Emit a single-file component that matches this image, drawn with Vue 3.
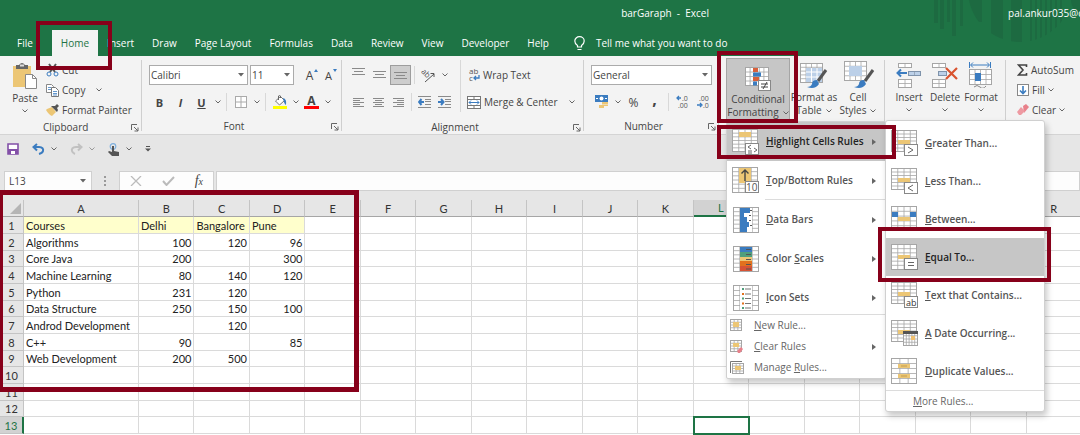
<script setup>
import { h, ref } from 'vue'

const G = '#a6a6a6'
const grid = (x, y, w, ht, c, r, s = G) => {
  let d = ''
  for (let i = 1; i < c; i++) d += `M${x + (w * i) / c} ${y}v${ht}`
  for (let i = 1; i < r; i++) d += `M${x} ${y + (ht * i) / r}h${w}`
  return `<rect x="${x}" y="${y}" width="${w}" height="${ht}" fill="#fff" stroke="${s}"/><path d="${d}" stroke="${s}" fill="none" stroke-width=".8"/>`
}
const box = (x, y, w, ht, f) => `<rect x="${x}" y="${y}" width="${w}" height="${ht}" fill="${f}"/>`
const line = (d, s = '#555', w = 1) => `<path d="${d}" fill="none" stroke="${s}" stroke-width="${w}"/>`
const label = (x, y, t, s = 9, f = '#555') => `<text x="${x}" y="${y}" font-size="${s}" font-weight="400" fill="${f}" font-family="Open Sans, sans-serif">${t}</text>`
const Y = '#ecc675'
const B = '#3b7cc0'
const ruleBase = grid(0.5, 0.5, 25, 21, 4, 6) + box(7, 10, 12, 4, Y)
const badge = (inner) => `<rect x="13.5" y="14.5" width="13" height="11" fill="#fff" stroke="#888"/>` + inner
const brush = line('M32 9L24 20', '#555', 3) + `<path d="M23 19q-5 0-5 4q-1 3-5 3q8 3 12-3z" fill="${B}"/>`
const lines = (arr) => line(arr.map(([x, y, w]) => `M${x} ${y + 0.5}h${w}`).join(''), '#8a8a8a')

const icons = {
  paste: [26, 28, `<rect x="1" y="4" width="18" height="21" fill="${Y}"/><path d="M4 3h3q3-4 6 0h3v4H4z" fill="#666"/><rect x="8" y="2.500" width="4" height="2" fill="#ddd"/><path d="M13.500 12.500h7l4 4v10h-11z" fill="#fff" stroke="#888"/><path d="M20.500 12.500v4h4" fill="none" stroke="#888"/>`],
  cut: [13, 14, line('M3 1L9 9M10 1L4 9', '#555', 2) + `<circle cx="3" cy="11" r="2" fill="none" stroke="${B}"/><circle cx="10" cy="11" r="2" fill="none" stroke="${B}"/>`],
  copy: [13, 14, `<path d="M.5 1.500h5l2 2v6h-7z" fill="#fff" stroke="#888"/><path d="M5.500 4.500h4l3 3v6h-7z" fill="#fff" stroke="#777"/>` + line('M7 8.500h4M7 10.500h4M7 12h4M2 4.500h3M2 6.500h3', B, 0.8)],
  painter: [13, 12, `<path d="M1 5l5-2 4 5-4 4q-3-1-6-6z" fill="${Y}"/><path d="M5 2l6 6 1-2-1-2 2-2-2-2-2 2z" fill="#555"/>`],
  launch: [8, 8, line('M.5 6V.5H6M3 3l4 4M7 3.500V7H3.500', '#666')],
  chev: [6, 4, line('M.5 .5L3 3L5.500 .5', '#666')],
  tri: [6, 4, `<path d="M0 0h6L3 3.500z" fill="#666"/>`],
  bordr: [12, 12, `<rect x=".5" y=".5" width="11" height="11" fill="#fff" stroke="#aaa"/>` + line('M6 0v12M0 6h12', '#aaa')],
  bucket: [14, 14, `<path d="M2.500 6l5-4.500 4 4-5 4.500z" fill="#fff" stroke="#777"/><path d="M5.500 5V1q1-1 2 0v2" fill="none" stroke="#666"/><path d="M10 3q4 1 3 7q-2-1-3-7z" fill="${B}"/>` + box(0, 11, 14, 3, '#ff0')],
  grow: [4, 3, `<path d="M0 3L2 0L4 3z" fill="${B}"/>`],
  shrink: [4, 3, `<path d="M0 0L2 3L4 0z" fill="${B}"/>`],
  top: [13, 8, lines([[0, 0, 13], [2, 3, 9], [0, 6, 13]])],
  mid: [13, 8, lines([[0, 0, 13], [2, 3, 9], [0, 6, 13]])],
  left: [11, 9, lines([[0, 0, 11], [0, 2, 7], [0, 4, 11], [0, 6, 7], [0, 8, 11]])],
  center: [11, 9, lines([[0, 0, 11], [2, 2, 7], [0, 4, 11], [2, 6, 7], [0, 8, 11]])],
  right: [11, 9, lines([[0, 0, 11], [4, 2, 7], [0, 4, 11], [4, 6, 7], [0, 8, 11]])],
  orient: [15, 15, `<g transform="rotate(45 6 6)">${label(0, 9, 'ab', 8)}</g>` + line('M4 14L13 6M13 9V5.500H9.500')],
  outdent: [14, 12, lines([[0, 0, 13], [7, 3, 6], [7, 5, 6], [7, 8, 6], [0, 11, 13]]) + line('M6 6H1M3.500 3L1 6l2.500 3', B, 2)],
  indent: [14, 12, lines([[0, 0, 13], [7, 3, 6], [7, 5, 6], [7, 8, 6], [0, 11, 13]]) + line('M0 6h5M3 3l2.500 3L3 9', B, 2)],
  wrap: [12, 18, label(1, 8, 'ab', 8) + label(1, 15, 'c', 8) + line('M11 9v3H6M8 10L6 12l2 2', B, 1.3)],
  merge: [14, 13, `<rect x=".5" y=".5" width="13" height="12" fill="#fff" stroke="#777"/>` + line('M0 3.500h14M0 9.500h14M7 0v3.500M7 9.500V13', '#777') + line('M2 6.500h10M4 4.500L2 6.500l2 2M10 4.500l2 2-2 2', B)],
  money: [14, 14, box(0, 0, 13, 7, B) + `<circle cx="6.500" cy="3.500" r="2" fill="#fff"/>` + box(1, 3, 2, 1, '#fff') + box(10, 3, 2, 1, '#fff') + box(7, 7, 6, 2, Y) + box(7, 9.500, 6, 1.500, Y) + box(4, 10, 5, 3, Y)],
  decinc: [13, 16, label(6, 7, '.0', 7) + label(2, 14, '.00', 7) + line('M5 4H1M3 2L1 4l2 2', B, 1.3)],
  decdec: [13, 16, label(2, 7, '.00', 7) + label(6, 14, '.0', 7) + line('M0 11h4M3 9l2 2-2 2', B, 1.3)],
  cond: [26, 24, grid(0.5, 0.5, 23, 18, 5, 4) + box(8, 1, 5, 4, '#d9603b') + box(8, 5.500, 8, 4, B) + box(8, 10, 6, 4, '#d9603b') + box(8, 14.500, 4, 4, B) + `<rect x="13.500" y="13.500" width="12" height="10" fill="#fff" stroke="#888"/>` + line('M16 17h7M16 20h7M22 15l-4 7', '#444')],
  fmtTable: [34, 28, grid(3.5, 2.5, 22, 19, 4, 5) + box(9, 7, 16, 14, '#bcd0e8') + line('M9 11h16M9 16h16M14.500 7v14M20 7v14', '#fff') + `<g transform="translate(-3 0)">${brush}</g>`],
  styles: [34, 28, grid(3.5, 0.5, 22, 19, 4, 4) + box(8, 5, 13, 10, '#bcd0e8') + brush],
  insert: [26, 26, grid(2.5, 1.5, 13, 4, 2, 1) + grid(12.5, 9.5, 12, 4, 2, 1, '#7f93ab') + box(13, 10, 5, 3, '#bcd0e8') + box(19, 10, 5, 3, '#bcd0e8') + grid(2.5, 17.5, 13, 8, 2, 2) + line('M11 11H2M5 7.500L1.500 11L5 14.500', B, 2)],
  del: [26, 26, grid(0.5, 1.5, 13, 4, 2, 1) + `<rect x="6.500" y="9.500" width="8" height="4" fill="#bcd0e8" stroke="#7f93ab"/>` + grid(0.5, 17.5, 13, 8, 2, 2) + line('M14 6l11 11M25 6L14 17', '#d9532f', 2.2)],
  format: [26, 26, grid(1.5, 7.5, 22, 15, 4, 3) + box(7, 11, 6, 8, B) + line('M3 3h18M5 .5L2.500 3L5 5.500M19 .5L21.500 3L19 5.500M1.500 0v6M22.500 0v6', B) + line('M6 25q3-3 6 0t6-1', '#888')],
  sum: [11, 12, line('M9.500 3V1H1.500L6 6L1.500 11H9.500V9', '#444', 1.6)],
  fill: [12, 12, `<rect x=".5" y=".5" width="11" height="11" fill="#fff" stroke="#888"/>` + line('M6 2v7M3 6.500L6 9.500L9 6.500', B, 1.6)],
  eraser: [12, 12, `<path d="M6 2l3-2 3 3-5 6z" fill="#e8808a"/><path d="M0 8l4-5 4 4-4 4H2z" fill="#ee9aa2"/>`],
  bulb: [11, 15, line('M3.500 11V9.500Q.8 7.800.8 5a4.700 4.300 0 0 1 9.400 0Q10.200 7.800 7.500 9.500V11zM3.500 13.500h4', '#fff', 1.2)],
  save: [12, 12, `<path d="M1 1h10v10H1z" fill="#fff" stroke="#8350a8" stroke-width="1.600"/>` + box(1, 6, 10, 5, '#8350a8') + box(4, 8, 4, 3, '#fff')],
  undo: [13, 12, line('M5 1L1.500 4L5 7.500M2 4h5q5 .5 4 4q-.5 2-4 3', B, 2)],
  redo: [13, 12, line('M8 1l3.500 3L8 7.500M11 4H6Q1 4.500 2 8q.5 2 3 3', '#aaa', 2)],
  touch: [12, 13, `<circle cx="5" cy="3.500" r="2.800" fill="none" stroke="#7fb0de" stroke-width="1.200"/><path d="M4 3h2v5l5 1v4H4L0 9l1-1 3 1z" fill="#555"/>`],
  custom: [6, 6, line('M1 .5h4', '#555') + `<path d="M0 2.500h6L3 5.500z" fill="#555"/>`],
  dots: [3, 10, box(0, 0, 2, 2, '#999') + box(0, 4, 2, 2, '#999') + box(0, 8, 2, 2, '#999')],
  cancel: [12, 10, line('M1 0l10 10M11 0L1 10', '#bbb', 1.3)],
  check: [13, 10, line('M1 5l3.500 4L12 1', '#bbb', 2)],
  hl: [28, 26, grid(0.5, 0.5, 25, 22, 4, 6) + box(7, 3, 12, 5, Y) + badge('') + line('M19 16l-3 2 3 2M22 19l3 2-3 2M16 22h4M16 24h4', '#666')],
  topbot: [28, 27, grid(0.5, 0.5, 25, 25, 4, 6) + box(7, 1, 12, 15, Y) + line('M13 14V3M9.500 6.500L13 3l3.500 3.500', '#444', 1.4) + badge(label(14, 24, '10', 10))],
  bars: [26, 26, grid(0.5, 0.5, 25, 25, 4, 6) + box(7, 1, 12, 24, '#fff') + box(7, 1, 10, 5, B) + box(7, 6, 4, 5, B) + box(7, 10, 7, 5, B) + box(7, 15, 9, 5, B) + box(7, 20, 7, 5, B) + line('M17 3.500h2M16 8.500h2M16 13.500h2M17 18.500h2')],
  scales: [26, 26, grid(0.5, 0.5, 25, 25, 4, 6) + box(7, 1, 12, 5, B) + box(7, 6, 12, 5, '#4f9f7c') + box(7, 11, 12, 4, Y) + box(7, 15, 12, 5, '#e2711d') + box(7, 20, 12, 5, '#d75335') + line('M13 3.500h5M13 8.500h5M13 13.500h5M13 18.500h5M13 23h5')],
  sets: [26, 26, grid(0.5, 0.5, 25, 25, 4, 5) + box(7, 1, 12, 24, '#fff') + line('M12 4h6M12 9h6M12 13.500h6M12 18.500h6M12 23h6', '#777') + box(9, 3, 2, 2, '#4f9f7c') + box(9, 8, 2, 2, '#e2711d') + box(9, 12.500, 2, 2, '#4f9f7c') + box(9, 17.500, 2, 2, '#e2711d') + box(9, 22, 2, 2, '#4f9f7c')],
  newRule: [14, 13, grid(0.5, 0.5, 11, 11, 3, 4) + box(3, 3, 6, 5, Y)],
  clrRule: [14, 13, grid(0.5, 0.5, 11, 11, 3, 4) + box(3, 3, 6, 4, Y) + `<path d="M7 11l4-4 2 2-3 4H8z" fill="#e8808a"/>`],
  mngRule: [14, 13, line('M.5 12V.5H12', '#777') + grid(2.5, 2.5, 11, 10, 3, 4) + box(5, 5, 6, 4, Y)],
  gt: [28, 27, ruleBase + badge(line('M17 17l5 3-5 3', '#666'))],
  lt: [28, 27, ruleBase + badge(line('M22 17l-5 3 5 3', '#666'))],
  between: [28, 27, grid(0.5, 0.5, 25, 24, 4, 5) + box(1, 6, 6, 5, B) + box(19, 6, 6, 5, B) + box(7, 11, 12, 4, Y)],
  eq: [28, 27, grid(0.5, 0.5, 25, 25, 4, 6) + box(7, 11, 12, 4, Y) + badge(line('M17 18.500h6M17 21.500h6', '#666'))],
  text: [28, 27, ruleBase + badge(label(15, 23.500, 'ab', 9, '#333'))],
  date: [28, 27, ruleBase + grid(12.5, 12.5, 14, 13, 5, 4) + box(12, 11, 15, 3, '#555') + box(20, 16, 4, 4, '#f0c070')],
  dup: [28, 27, grid(0.5, 0.5, 25, 25, 3, 5) + box(7, 6, 12, 4, Y) + box(7, 16, 12, 4, Y) + line('M10 8h6M10 18h6', '#b89248', 0.8)],
}
const Ico = (p) => {
  const [w, ht, body] = icons[p.n]
  return h('svg', { width: w, height: ht, viewBox: `0 0 ${w} ${ht}`, 'aria-hidden': 'true', innerHTML: body })
}
Ico.props = ['n']

const tabs = ['File', 'Home', 'Insert', 'Draw', 'Page Layout', 'Formulas', 'Data', 'Review', 'View', 'Developer', 'Help']
const cols = 'ABCDEFGHIJKLMNOPQR'.split('')
const sheet = [
  ['Courses', 'Delhi', 'Bangalore', 'Pune'],
  ['Algorithms', 100, 120, 96],
  ['Core Java', 200, '', 300],
  ['Machine Learning', 80, 140, 120],
  ['Python', 231, 120, ''],
  ['Data Structure', 250, 150, 100],
  ['Androd Development', '', 120, ''],
  ['C++', 90, '', 85],
  ['Web Development', 200, 500, ''],
]
const cell = (r, c) => (sheet[r - 1] ? sheet[r - 1][c] : '')

const rules = [
  { i: 'hl', t: ['', 'H', 'ighlight Cells Rules'], on: true, sub: true },
  { i: 'topbot', t: ['', 'T', 'op/Bottom Rules'], sub: true, end: true },
  { i: 'bars', t: ['', 'D', 'ata Bars'], sub: true },
  { i: 'scales', t: ['Color ', 'S', 'cales'], sub: true },
  { i: 'sets', t: ['', 'I', 'con Sets'], sub: true },
]
const manage = [
  { i: 'newRule', t: ['', 'N', 'ew Rule...'] },
  { i: 'clrRule', t: ['', 'C', 'lear Rules'], sub: true },
  { i: 'mngRule', t: ['Manage ', 'R', 'ules...'] },
]
const highlights = [
  { i: 'gt', t: ['', 'G', 'reater Than...'] },
  { i: 'lt', t: ['', 'L', 'ess Than...'] },
  { i: 'between', t: ['', 'B', 'etween...'] },
  { i: 'eq', t: ['', 'E', 'qual To...'], on: true },
  { i: 'text', t: ['', 'T', 'ext that Contains...'] },
  { i: 'date', t: ['', 'A', ' Date Occurring...'] },
  { i: 'dup', t: ['', 'D', 'uplicate Values...'] },
]
const nameBox = ref('L13')
const formula = ref('')
</script>

<template>
  <div class="app">
    <header class="top">
      <svg class="deco" width="150" height="56" viewBox="0 0 150 56" aria-hidden="true">
        <clipPath id="disc"><circle cx="90" cy="-10" r="52" /></clipPath>
        <path d="M4 0h4v23h-4zM10 0h4v29h-4zM17 0h3v22h-3zM22 0h4v36h-4zM30 0h3v26h-3z" />
        <path clip-path="url(#disc)" d="M30 0h22v22h-22zM61 0h12v56h-12zM81 0h11v56h-11zM100 0h2v56h-2zM105 0h2v56h-2zM110 0h2v56h-2zM115 0h2v56h-2zM120 0h2v56h-2zM125 0h2v56h-2zM130 0h2v56h-2z" />
        <circle cx="155" cy="0" r="14" />
      </svg>
      <div class="title">
        <span class="doc">barGaraph&nbsp; -&nbsp; Excel</span>
        <span class="user">pal.ankur035@c</span>
      </div>
      <nav class="tabs">
        <a v-for="t in tabs" :key="t" href="#" :class="{ on: t === 'Home' }">{{ t }}</a>
        <a href="#" class="tell"><Ico n="bulb" />Tell me what you want to do</a>
      </nav>
    </header>

    <section class="ribbon">
      <div class="group clip">
        <div class="body">
          <button class="big"><Ico n="paste" /><span>Paste</span><Ico n="chev" /></button>
          <div class="stack">
            <button><Ico n="cut" />Cut</button>
            <button><Ico n="copy" />Copy<Ico n="chev" class="gap" /></button>
            <button><Ico n="painter" />Format Painter</button>
          </div>
        </div>
        <div class="name">Clipboard<button class="launch" aria-label="Clipboard settings"><Ico n="launch" /></button></div>
      </div>

      <div class="group font">
        <div class="body col">
          <div class="line">
            <label class="pick face"><select aria-label="Font"><option>Calibri</option></select><Ico n="tri" /></label>
            <label class="pick size"><select aria-label="Font size"><option>11</option></select><Ico n="tri" /></label>
            <button class="letter">A<Ico n="grow" /></button>
            <button class="letter small">A<Ico n="shrink" /></button>
          </div>
          <div class="line">
            <button class="w21"><b>B</b></button>
            <button class="w21"><b><i>I</i></b></button>
            <button class="w21"><b><u>U</u></b></button>
            <button class="ch" aria-label="Underline options"><Ico n="chev" /></button>
            <hr />
            <button class="w21" aria-label="Borders"><Ico n="bordr" /></button>
            <button class="ch" aria-label="Border options"><Ico n="chev" /></button>
            <hr />
            <button class="w21" aria-label="Fill colour"><Ico n="bucket" /></button>
            <button class="ch" aria-label="Fill colour options"><Ico n="chev" /></button>
            <button class="w21 ink"><b>A</b></button>
            <button class="ch" aria-label="Font colour options"><Ico n="chev" /></button>
          </div>
        </div>
        <div class="name">Font<button class="launch" aria-label="Font settings"><Ico n="launch" /></button></div>
      </div>

      <div class="group align">
        <div class="body">
          <div class="col">
            <div class="line">
              <button class="w21 high" aria-label="Top align"><Ico n="top" /></button>
              <button class="w21" aria-label="Middle align"><Ico n="mid" /></button>
              <button class="w21 low on" aria-label="Bottom align"><Ico n="mid" /></button>
              <hr />
              <button class="w21" aria-label="Orientation"><Ico n="orient" /></button>
              <button class="ch" aria-label="Orientation options"><Ico n="chev" /></button>
            </div>
            <div class="line">
              <button class="w21" aria-label="Align left"><Ico n="left" /></button>
              <button class="w21" aria-label="Center"><Ico n="center" /></button>
              <button class="w21" aria-label="Align right"><Ico n="right" /></button>
              <hr />
              <button class="w21" aria-label="Decrease indent"><Ico n="outdent" /></button>
              <button class="w21" aria-label="Increase indent"><Ico n="indent" /></button>
            </div>
          </div>
          <div class="col wide">
            <div class="line"><button class="txt"><Ico n="wrap" />Wrap Text</button></div>
            <div class="line"><button class="txt"><Ico n="merge" />Merge &amp; Center<Ico n="chev" class="gap" /></button></div>
          </div>
        </div>
        <div class="name">Alignment<button class="launch" aria-label="Alignment settings"><Ico n="launch" /></button></div>
      </div>

      <div class="group number">
        <div class="body col">
          <div class="line">
            <label class="pick form"><select aria-label="Number format"><option>General</option></select><Ico n="tri" /></label>
          </div>
          <div class="line">
            <button class="w21" aria-label="Currency"><Ico n="money" /></button>
            <button class="ch" aria-label="Currency options"><Ico n="chev" /></button>
            <button class="w21 sym">%</button>
            <button class="w21 comma" aria-label="Comma style"><b>,</b></button>
            <hr />
            <button class="w21" aria-label="Increase decimal"><Ico n="decinc" /></button>
            <button class="w21" aria-label="Decrease decimal"><Ico n="decdec" /></button>
          </div>
        </div>
        <div class="name">Number<button class="launch" aria-label="Number settings"><Ico n="launch" /></button></div>
      </div>

      <div class="group styles">
        <div class="body">
          <button class="big cond on"><Ico n="cond" /><span>Conditional</span><span>Formatting <Ico n="chev" /></span></button>
          <button class="big tbl"><Ico n="fmtTable" /><span>Format as</span><span>Table <Ico n="chev" /></span></button>
          <button class="big cel"><Ico n="styles" /><span>Cell</span><span>Styles <Ico n="chev" /></span></button>
        </div>
      </div>

      <div class="group cells">
        <div class="body">
          <button class="big"><Ico n="insert" /><span>Insert</span><Ico n="chev" /></button>
          <button class="big"><Ico n="del" /><span>Delete</span><Ico n="chev" /></button>
          <button class="big"><Ico n="format" /><span>Format</span><Ico n="chev" /></button>
        </div>
      </div>

      <div class="group edit">
        <div class="body stack">
          <button><Ico n="sum" />AutoSum</button>
          <button><Ico n="fill" />Fill<Ico n="chev" /></button>
          <button><Ico n="eraser" />Clear<Ico n="chev" /></button>
        </div>
      </div>
    </section>

    <div class="qat">
      <button class="q" aria-label="Save"><Ico n="save" /></button>
      <button class="q" aria-label="Undo"><Ico n="undo" /><Ico n="chev" /></button>
      <button class="q dim" aria-label="Redo"><Ico n="redo" /><Ico n="chev" /></button>
      <button class="q" aria-label="Touch mode"><Ico n="touch" /><Ico n="chev" /></button>
      <button class="q" aria-label="Customize toolbar"><Ico n="custom" /></button>
    </div>

    <div class="bar">
      <label class="namebox"><input v-model="nameBox" aria-label="Name box" /><Ico n="tri" /></label>
      <Ico n="dots" />
      <div class="acts">
        <button aria-label="Cancel"><Ico n="cancel" /></button>
        <button aria-label="Enter"><Ico n="check" /></button>
        <button class="fx">f<small>x</small></button>
      </div>
      <input v-model="formula" class="formula" aria-label="Formula bar" />
    </div>

    <main class="sheet">
      <table>
        <colgroup><col class="c0" /><col class="c1" /><col v-for="n in 17" :key="n" /></colgroup>
        <thead>
          <tr>
            <th class="corner"><span></span></th>
            <th v-for="c in cols" :key="c" :class="{ sel: c === 'L' }">{{ c }}</th>
          </tr>
        </thead>
        <tbody>
          <tr v-for="r in 13" :key="r">
            <th :class="{ sel: r === 13 }">{{ r }}</th>
            <td
              v-for="(c, i) in cols"
              :key="c"
              :class="{ head: r === 1 && i < 4, num: r > 1 && i > 0, cur: r === 13 && c === 'L' }"
            >{{ cell(r, i) }}</td>
          </tr>
        </tbody>
      </table>
    </main>

    <div class="menu main-menu">
      <button v-for="m in rules" :key="m.i" class="item" :class="{ on: m.on, end: m.end }">
        <Ico :n="m.i" /><span>{{ m.t[0] }}<u>{{ m.t[1] }}</u>{{ m.t[2] }}</span><i class="arrow"></i>
      </button>
      <div class="rest">
        <button v-for="m in manage" :key="m.i" class="mini">
          <Ico :n="m.i" /><span>{{ m.t[0] }}<u>{{ m.t[1] }}</u>{{ m.t[2] }}</span><i v-if="m.sub" class="arrow"></i>
        </button>
      </div>
    </div>

    <div class="menu sub-menu">
      <button v-for="m in highlights" :key="m.i" class="item" :class="{ on: m.on }">
        <Ico :n="m.i" /><span>{{ m.t[0] }}<u>{{ m.t[1] }}</u>{{ m.t[2] }}</span>
      </button>
      <button class="more"><span><u>M</u>ore Rules...</span></button>
    </div>

    <div class="mark m-home"></div>
    <div class="mark m-cond"></div>
    <div class="mark m-rule"></div>
    <div class="mark m-equal"></div>
    <div class="mark m-data"></div>
  </div>
</template>

<style>
html, body { overflow: hidden; }
</style>

<style scoped>
* { box-sizing: border-box; }
.app {
  position: relative;
  height: 100vh;
  overflow: hidden;
  display: flex;
  flex-direction: column;
  background: #fff;
  color: #444;
  font: 10px/13px "Open Sans", "Noto Sans", sans-serif;
}
button, input, select { font: inherit; color: inherit; border: 0; padding: 0; margin: 0; background: none; }
button { display: flex; align-items: center; white-space: nowrap; }
svg { flex: none; display: block; }

.top { position: relative; background: #1e7445; color: #fff; flex: none; overflow: hidden; }
.deco { position: absolute; top: 0; right: 0; fill: #1d6a41; }
.title { position: relative; display: flex; height: 30px; padding-top: 7px; white-space: nowrap; }
.title::before { content: ""; flex: none; width: 34%; }
.doc { margin-left: 254px; }
.user { margin-left: auto; margin-right: -3px; }
.tabs { position: relative; display: flex; height: 26px; padding-left: 8px; }
.tabs a { color: #fff; text-decoration: none; padding: 0 9px; line-height: 26px; white-space: nowrap; }
.tabs a.on { background: #f3f3f3; color: #1e7445; margin-left: 10px; }
.tabs .tell { display: flex; align-items: center; gap: 11px; margin-left: 7px; }

.ribbon { display: flex; flex: none; height: 79px; background: #f3f3f3; border-bottom: 1px solid #d4d4d4; overflow: hidden; }
.group { flex: none; display: flex; flex-direction: column; position: relative; padding-top: 4px; }
.group::after { content: ""; position: absolute; right: 0; top: 4px; bottom: 3px; width: 1px; background: #cfcfcf; }
.body { display: flex; height: 61px; }
.col { display: flex; flex-direction: column; gap: 7px; padding-top: 5px; }
.line { display: flex; align-items: center; height: 20px; }
.name { position: relative; text-align: center; line-height: 15px; }
.launch { position: absolute; right: 3px; top: 4px; }
.clip { width: 142px; }
.clip .name { padding-left: 38px; text-align: left; padding-left: 43px; }
.font { width: 200px; }
.font .name { padding-right: 16px; }
.align { width: 242px; }
.align .name { padding-right: 16px; }
.number { width: 135px; }
.number .name { padding-right: 16px; }
.styles { width: 166px; }
.cells { width: 121px; }
.edit { flex: 1; }
.edit::after { display: none; }

.big { flex-direction: column; }
.clip .big { width: 30px; margin-left: 10px; padding-top: 2px; }
.big > span { display: flex; align-items: center; gap: 4px; }
.clip .big svg + span { margin-top: 2px; margin-bottom: 4px; }
.stack { display: flex; flex-direction: column; }
.stack button { height: 20px; gap: 3px; }
.clip .stack { margin-left: 6px; }
.gap { margin-left: 8px; }
.font .body { padding-left: 7px; }
.pick { display: flex; align-items: center; height: 20px; background: #fff; border: 1px solid #ababab; padding-right: 3px; }
.pick select { appearance: none; flex: 1; min-width: 0; padding-left: 1px; }
.face { width: 99px; }
.size { width: 44px; margin: 0 6px 0 2px; }
.form { width: 121px; }
.letter { position: relative; width: 19px; justify-content: center; font-size: 12px; }
.letter svg { position: absolute; right: 1px; top: 0; }
.small { font-size: 11px; }
.w21 { width: 21px; height: 20px; justify-content: center; font-size: 11px; }
.ch { width: 11px; justify-content: center; }
.line hr { width: 1px; height: 18px; border: 0; margin: 0 3px; background: #d8d8d8; }
.ink b { line-height: 11px; border-bottom: 3px solid #f00; padding: 0 3px; font-size: 12px; }
.align .body { padding-left: 6px; }
.high { align-items: flex-start; padding-top: 3px; }
.low { align-items: flex-end; padding-bottom: 4px; }
.w21.on { background: #cdcdcd; border: 1px solid #9d9d9d; }
.wide { margin: 0 0 8px 5px; border-left: 1px solid #d8d8d8; padding-left: 6px; }
.align .col:first-child { width: 107px; }
.txt { gap: 3px; }
.wide .line:first-child .txt { padding-left: 1px; }
.number .body { padding-left: 7px; }
.sym { font-size: 12px; }
.comma { font-size: 16px; padding-bottom: 6px; }
.styles .body { padding-left: 7px; }
.styles .big svg { margin-bottom: 2px; }
.styles .big span svg { margin: 0; }
.cond { width: 64px; margin-top: -2px; height: 63px; padding-top: 5px; }
.cond.on { background: #c6c6c6; border: 1px solid #a5a5a5; }
.cond > svg { margin-top: 3px; }
.tbl { width: 48px; padding-top: 1px; }
.cel { width: 40px; padding-top: 1px; }
.cells .body { padding: 2px 0 0 6px; }
.cells .big { width: 36px; }
.cells .big > span { margin: 3px 0 4px; }
.edit .stack { padding-left: 11px; }

.qat { display: flex; align-items: center; flex: none; height: 36px; background: #e6e6e6; padding: 0 7px 8px; gap: 13px; }
.q { gap: 6px; }
.dim { opacity: .6; }
.bar { display: flex; align-items: center; flex: none; height: 29px; background: #e6e6e6; padding: 0 0 9px 4px; }
.namebox { display: flex; align-items: center; width: 88px; height: 20px; background: #fdfdfd; border: 1px solid #d0d0d0; padding-right: 5px; }
.namebox input { flex: 1; min-width: 0; padding-left: 4px; }
.bar > svg { margin: 0 12px; }
.acts { display: flex; align-items: center; justify-content: space-around; width: 95px; height: 20px; background: #fdfdfd; border: 1px solid #d0d0d0; margin-right: 2px; }
.fx { font: italic 14px "Liberation Serif", serif; }
.fx small { font-size: 10px; }
.formula { flex: 1; min-width: 0; height: 20px; background: #fdfdfd; border: 1px solid #d0d0d0; }

.sheet { flex: 1; overflow: hidden; }
table { width: calc(100% + 2px); table-layout: fixed; border-collapse: separate; border-spacing: 0; font: 11px/15px Lato, "Open Sans", sans-serif; color: #222; }
.c0 { width: 24px; }
.c1 { width: 115px; }
tr { height: 17px; }
tbody tr:nth-child(3n) { height: 16px; }
th { font-weight: 400; padding: 0; background: #e6e6e6; border-right: 1px solid #c4c4c4; border-bottom: 1px solid #c4c4c4; color: #333; line-height: 15px; }
thead th { border-bottom-color: #a6a6a6; }
td { padding: 0 2px; height: 16px; border-right: 1px solid #dadada; border-bottom: 1px solid #dadada; white-space: nowrap; }
.num { text-align: right; }
.head { background: #ffffcc; }
.corner span { display: block; margin-left: auto; margin-right: 2px; width: 0; border-left: 11px solid transparent; border-bottom: 11px solid #b5b5b5; }
th.sel { background: #d2d2d2; color: #1e7445; }
thead th.sel { border-bottom: 2px solid #1e7445; }
tbody th.sel { border-right: 2px solid #1e7445; }
.cur { outline: 2px solid #1e7445; outline-offset: -1px; }
tbody tr:nth-child(3n) th, tbody tr:nth-child(3n) td { line-height: 14px; height: 16px; }

.menu { position: absolute; background: #fff; border: 1px solid #d0d0d0; box-shadow: 2px 4px 6px rgba(0, 0, 0, .22); display: flex; flex-direction: column; }
.menu button { width: 100%; }
.main-menu { left: 726px; top: 121px; width: 160px; border-radius: 2px; }
.sub-menu { left: 885px; top: 120px; width: 160px; border-radius: 3px; padding-top: 3px; }
.item { position: relative; height: 38px; gap: 6px; padding-left: 5px; font-weight: 600; color: #555; }
.item svg { width: 28px; }
.item.on { background: #c6c6c6; color: #222; }
.main-menu .item { height: 39px; }
.arrow { margin-left: auto; margin-right: 9px; border-left: 4px solid #666; border-top: 3px solid transparent; border-bottom: 3px solid transparent; }
.end::after { content: ""; position: absolute; left: 38px; right: 0; bottom: 0; height: 1px; background: #dcdcdc; }
.rest { border-top: 1px solid #dcdcdc; margin-top: -3px; }
.mini { height: 21px; padding-left: 3px; gap: 10px; color: #666; }
.more { height: 21px; border-top: 1px solid #dcdcdc; padding-left: 27px; color: #666; }

.mark { position: absolute; border: 4px solid #87001a; pointer-events: none; }
.m-home { left: 36px; top: 21px; width: 76px; height: 49px; }
.m-cond { left: 717px; top: 51px; width: 81px; height: 72px; }
.m-rule { left: 717px; top: 125px; width: 179px; height: 34px; }
.m-equal { left: 878px; top: 227px; width: 173px; height: 55px; }
.m-data { left: -2px; top: 190px; width: 361px; height: 202px; border-width: 5px; }
</style>
